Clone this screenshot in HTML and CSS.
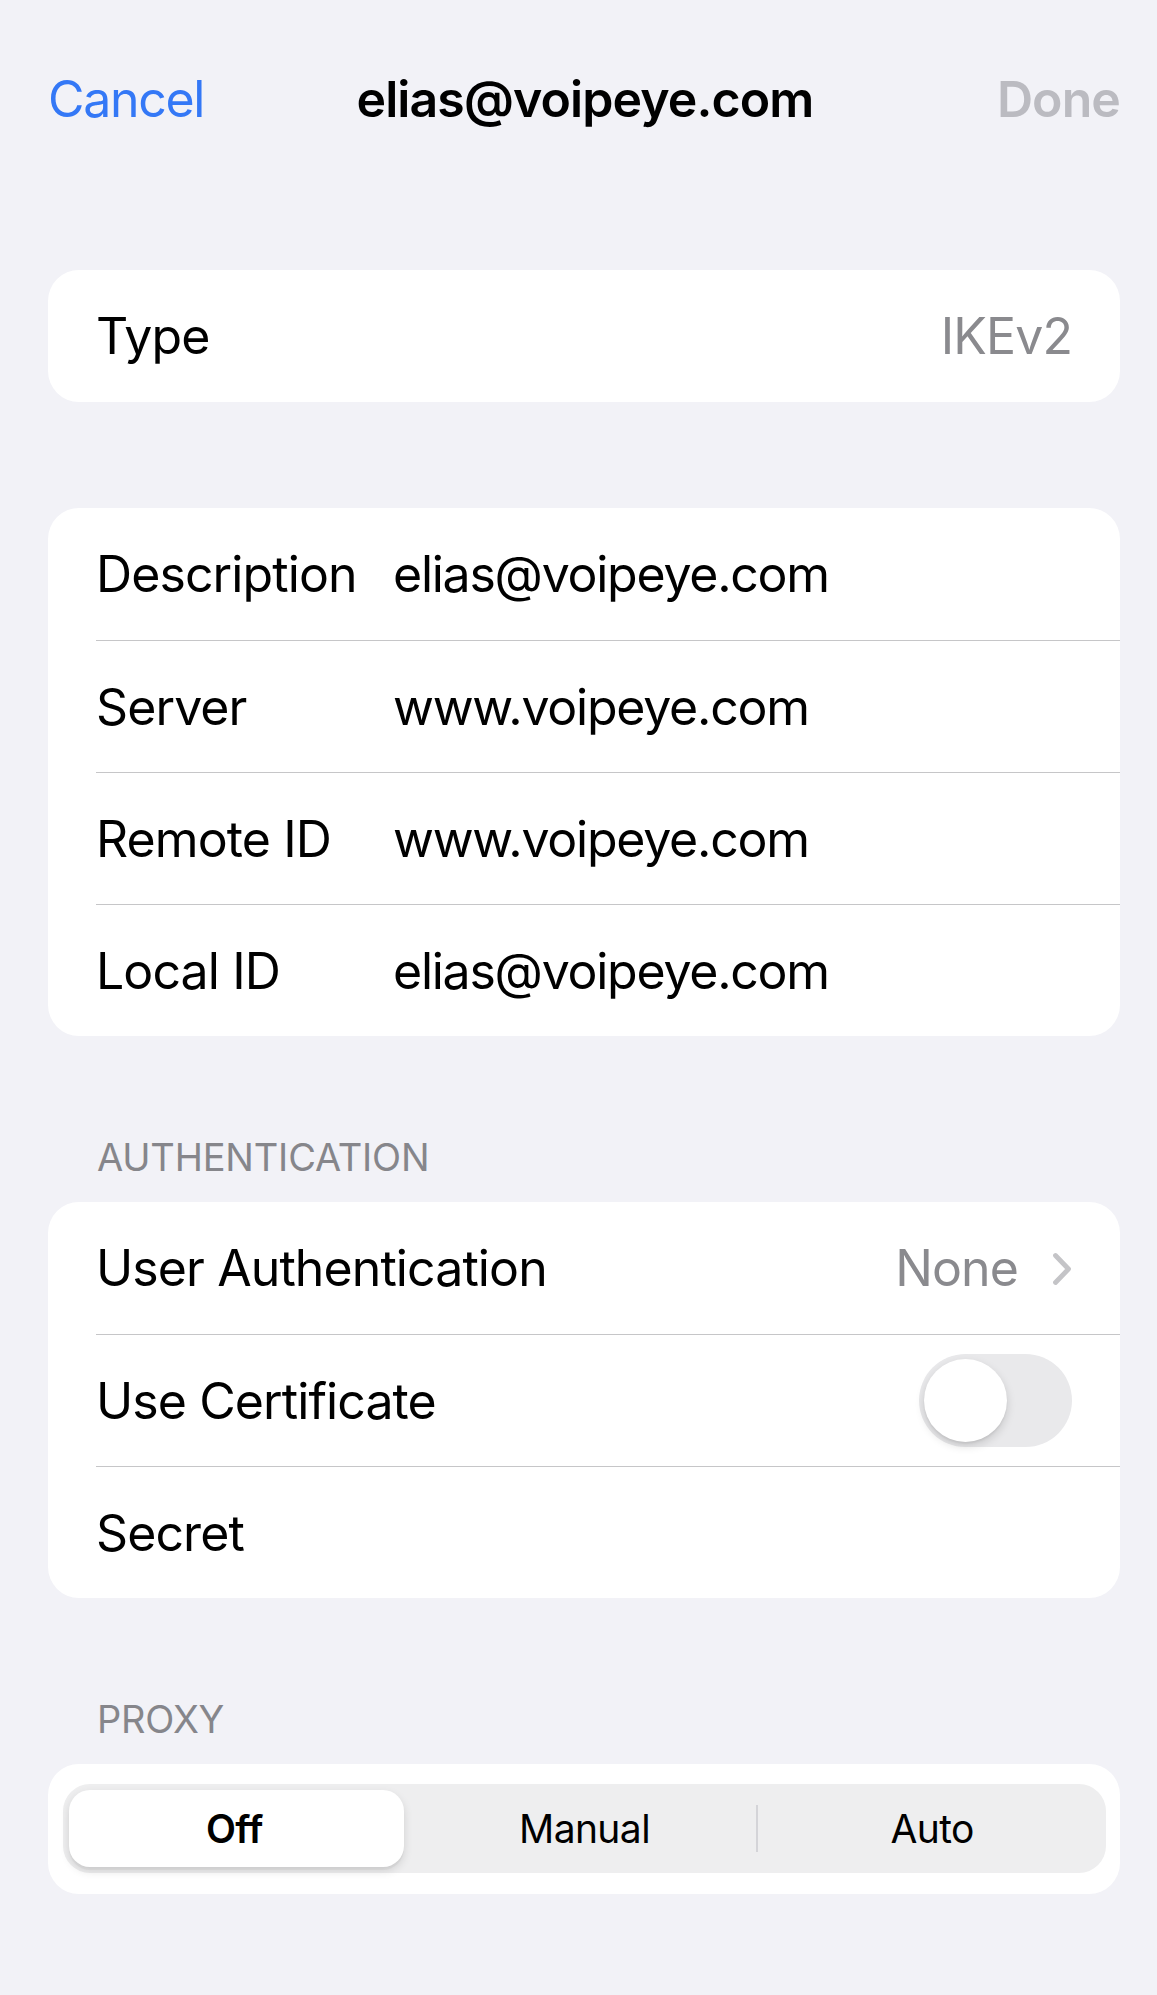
FILE: index.html
```html
<!DOCTYPE html>
<html lang="en">
<head>
<meta charset="utf-8">
<title>elias@voipeye.com</title>
<link rel="stylesheet" href="styles.css">
</head>
<body>
<div class="screen">
  <header class="nav">
    <span class="nav-cancel">Cancel</span>
    <span class="nav-title">elias@voipeye.com</span>
    <span class="nav-done">Done</span>
  </header>

  <section class="card card-first">
    <div class="row row-split">
      <span class="label">Type</span>
      <span class="detail">IKEv2</span>
    </div>
  </section>

  <section class="card card-fields">
    <div class="row row-field">
      <span class="label">Description</span>
      <span class="value">elias@voipeye.com</span>
    </div>
    <div class="row row-field">
      <span class="label">Server</span>
      <span class="value">www.voipeye.com</span>
    </div>
    <div class="row row-field">
      <span class="label">Remote ID</span>
      <span class="value">www.voipeye.com</span>
    </div>
    <div class="row row-field">
      <span class="label">Local ID</span>
      <span class="value">elias@voipeye.com</span>
    </div>
  </section>

  <h2 class="section-header">AUTHENTICATION</h2>
  <section class="card">
    <div class="row row-split">
      <span class="label">User Authentication</span>
      <span class="accessory">
        <span class="detail">None</span>
        <svg class="chevron" width="20" height="34" viewBox="0 0 20 34" aria-hidden="true">
          <polyline points="3.5,3.5 16.5,17 3.5,30.5" fill="none" stroke="#c4c4c7" stroke-width="4.8" stroke-linecap="round" stroke-linejoin="round"/>
        </svg>
      </span>
    </div>
    <div class="row row-split">
      <span class="label">Use Certificate</span>
      <span class="switch"><span class="knob"></span></span>
    </div>
    <div class="row row-split">
      <span class="label">Secret</span>
    </div>
  </section>

  <h2 class="section-header">PROXY</h2>
  <section class="card card-segment">
    <div class="segmented">
      <span class="segment selected">Off</span>
      <span class="segment">Manual</span>
      <span class="segment divided">Auto</span>
    </div>
  </section>
</div>
</body>
</html>
```

FILE: styles.css
```css
* {
  box-sizing: border-box;
}

html, body {
  margin: 0;
  padding: 0;
  background: #f2f2f7;
}

body {
  font-family: Inter, "Noto Sans", "Liberation Sans", sans-serif;
  color: #000;
  -webkit-font-smoothing: antialiased;
}

.screen {
  min-height: 1995px;
  padding: 0 37px 0 48px;
}

/* Navigation bar */
.nav {
  display: grid;
  grid-template-columns: 1fr auto 1fr;
  align-items: center;
  padding-top: 69px;
  font-size: 50px;
  line-height: 60px;
  letter-spacing: -0.9px;
}

.nav-cancel {
  color: #3478f6;
  justify-self: start;
  letter-spacing: -1.3px;
}

.nav-title {
  font-weight: 600;
  padding-left: 2px;
}

.nav-done {
  color: #bbbbc1;
  justify-self: end;
  font-weight: 600;
}

/* Cards */
.card {
  background: #fff;
  border-radius: 31px;
  overflow: hidden;
}

.card-first {
  margin-top: 141px;
}

.card-fields {
  margin-top: 106px;
}

.row {
  height: 132px;
  margin-left: 48px;
  padding-right: 48px;
  font-size: 50px;
  line-height: 60px;
  letter-spacing: -0.9px;
}

.row + .row {
  border-top: 1.5px solid #c6c6c8;
}

.row-split {
  display: flex;
  align-items: center;
  justify-content: space-between;
}

.row-field {
  display: grid;
  grid-template-columns: 297px 1fr;
  align-items: center;
}

.value {
  letter-spacing: -1.25px;
}

.detail {
  color: #8a8a8e;
}

.accessory {
  display: flex;
  align-items: center;
  gap: 34px;
}

.chevron {
  display: block;
  margin-top: 2px;
}

/* Switch */
.switch {
  position: relative;
  width: 153px;
  height: 93px;
  border-radius: 47px;
  background: #e9e9eb;
  flex: none;
}

.knob {
  position: absolute;
  left: 5px;
  top: 5px;
  width: 83px;
  height: 83px;
  border-radius: 50%;
  background: #fff;
  box-shadow: 0 4px 10px rgba(0, 0, 0, 0.15), 0 2px 2px rgba(0, 0, 0, 0.05);
}

/* Section headers */
.section-header {
  margin: 98px 0 22px 49px;
  font-size: 38px;
  line-height: 46px;
  font-weight: 400;
  color: #86868b;
  letter-spacing: -0.2px;
}

/* Segmented control */
.card-segment {
  padding: 20px 14px 21px 15px;
}

.segmented {
  display: grid;
  grid-template-columns: repeat(3, 1fr);
  height: 89px;
  padding: 6px;
  border-radius: 27px;
  background: #eeeeef;
}

.segment {
  position: relative;
  display: flex;
  align-items: center;
  justify-content: center;
  font-size: 39px;
  letter-spacing: -0.6px;
  color: #000;
}

.segment.selected {
  background: #fff;
  border-radius: 21px;
  font-weight: 600;
  box-shadow: 0 4px 10px rgba(0, 0, 0, 0.12), 0 3px 1px rgba(0, 0, 0, 0.04);
  margin-right: 9px;
  padding-right: 4px;
}

.segment.divided {
  padding-left: 8px;
}

.segment.divided::before {
  content: "";
  position: absolute;
  left: 0;
  top: 15px;
  bottom: 15px;
  width: 2px;
  background: #d4d4d8;
}
```
